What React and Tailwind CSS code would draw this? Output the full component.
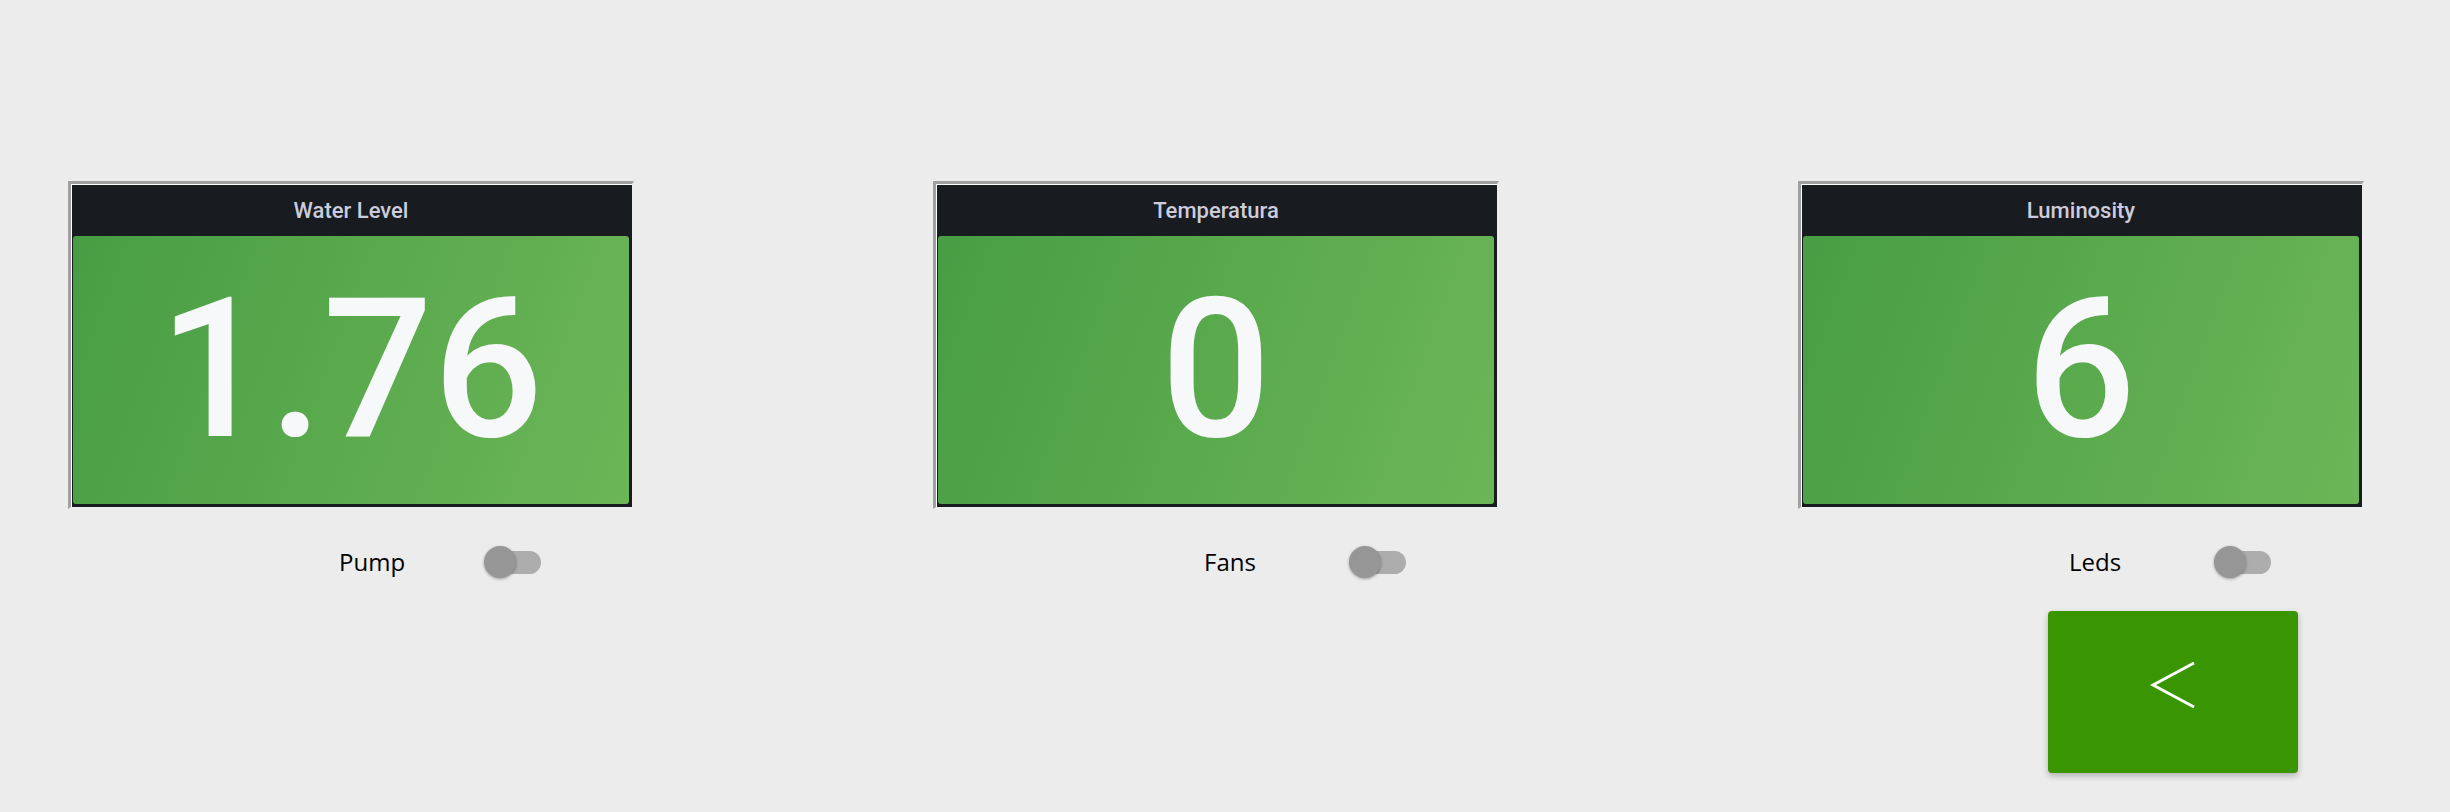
import React from "react";

/* ============================================================
   DATA
============================================================ */

const PANELS = [
  { title: "Water Level", value: "1.76", label: "Pump" },
  { title: "Temperatura", value: "0", label: "Fans" },
  { title: "Luminosity", value: "6", label: "Leds" },
];

/* ============================================================
   APP
============================================================ */

export default function App() {
  return (
    <div className="min-h-[812px] w-full bg-[#ececec] pt-[181px] pl-[68px]">
      <div className="flex gap-[299px]">
        {PANELS.map((p, i) => (
          <div key={p.title} className="flex w-[566px] flex-col">
            <StatPanel title={p.title} value={p.value} />

            <div className="mt-[31px] flex h-[44px] items-center pl-[271px]">
              <span className="w-[145px] text-[24px] leading-none text-black [font-family:'Open_Sans',sans-serif]">
                {p.label}
              </span>
              <Toggle />
            </div>

            {i === 2 && (
              <div className="mt-[27px] pl-[250px]">
                <button className="flex h-[162px] w-[250px] items-center justify-center rounded-[4px] bg-[#399602] shadow-[0_3px_6px_rgba(0,0,0,0.25)]">
                  <svg width="46" height="48" viewBox="0 0 46 48" className="-mt-[14px]">
                    <polyline
                      points="44,2 3,24 44,46"
                      fill="none"
                      stroke="white"
                      strokeWidth="3"
                    />
                  </svg>
                </button>
              </div>
            )}
          </div>
        ))}
      </div>
    </div>
  );
}

/* ============================================================
   COMPONENTS
============================================================ */

function StatPanel({ title, value }) {
  return (
    <div className="h-[328px] w-[566px] border-[3px] border-t-[#a0a0a0] border-l-[#a0a0a0] border-r-[#ececec] border-b-[#ececec] border-r-2 border-b-2">
      <div className="flex h-full flex-col border-t border-l border-white bg-[#181b1f] pr-[3px] pb-[3px] pl-[1px]">
        <div className="flex h-[51px] items-center justify-center text-[22px] font-medium text-[#ccccdc] [font-family:Roboto,sans-serif]">
          {title}
        </div>
        <div className="flex flex-1 items-center justify-center rounded-[3px] bg-[linear-gradient(110deg,#489d44,#6cb657)]">
          <span className="text-[194px] font-medium leading-none text-[#f7f8fa] [font-family:Roboto,sans-serif]">
            {value}
          </span>
        </div>
      </div>
    </div>
  );
}

function Toggle() {
  return (
    <div className="relative h-[32px] w-[57px]">
      <div className="absolute top-[4.5px] right-0 left-[6px] h-[23px] rounded-full bg-[#adadad]" />
      <div className="absolute top-0 left-0 h-[32px] w-[32px] rounded-full bg-[#969696] shadow-[0_1px_3px_rgba(0,0,0,0.35)]" />
    </div>
  );
}
